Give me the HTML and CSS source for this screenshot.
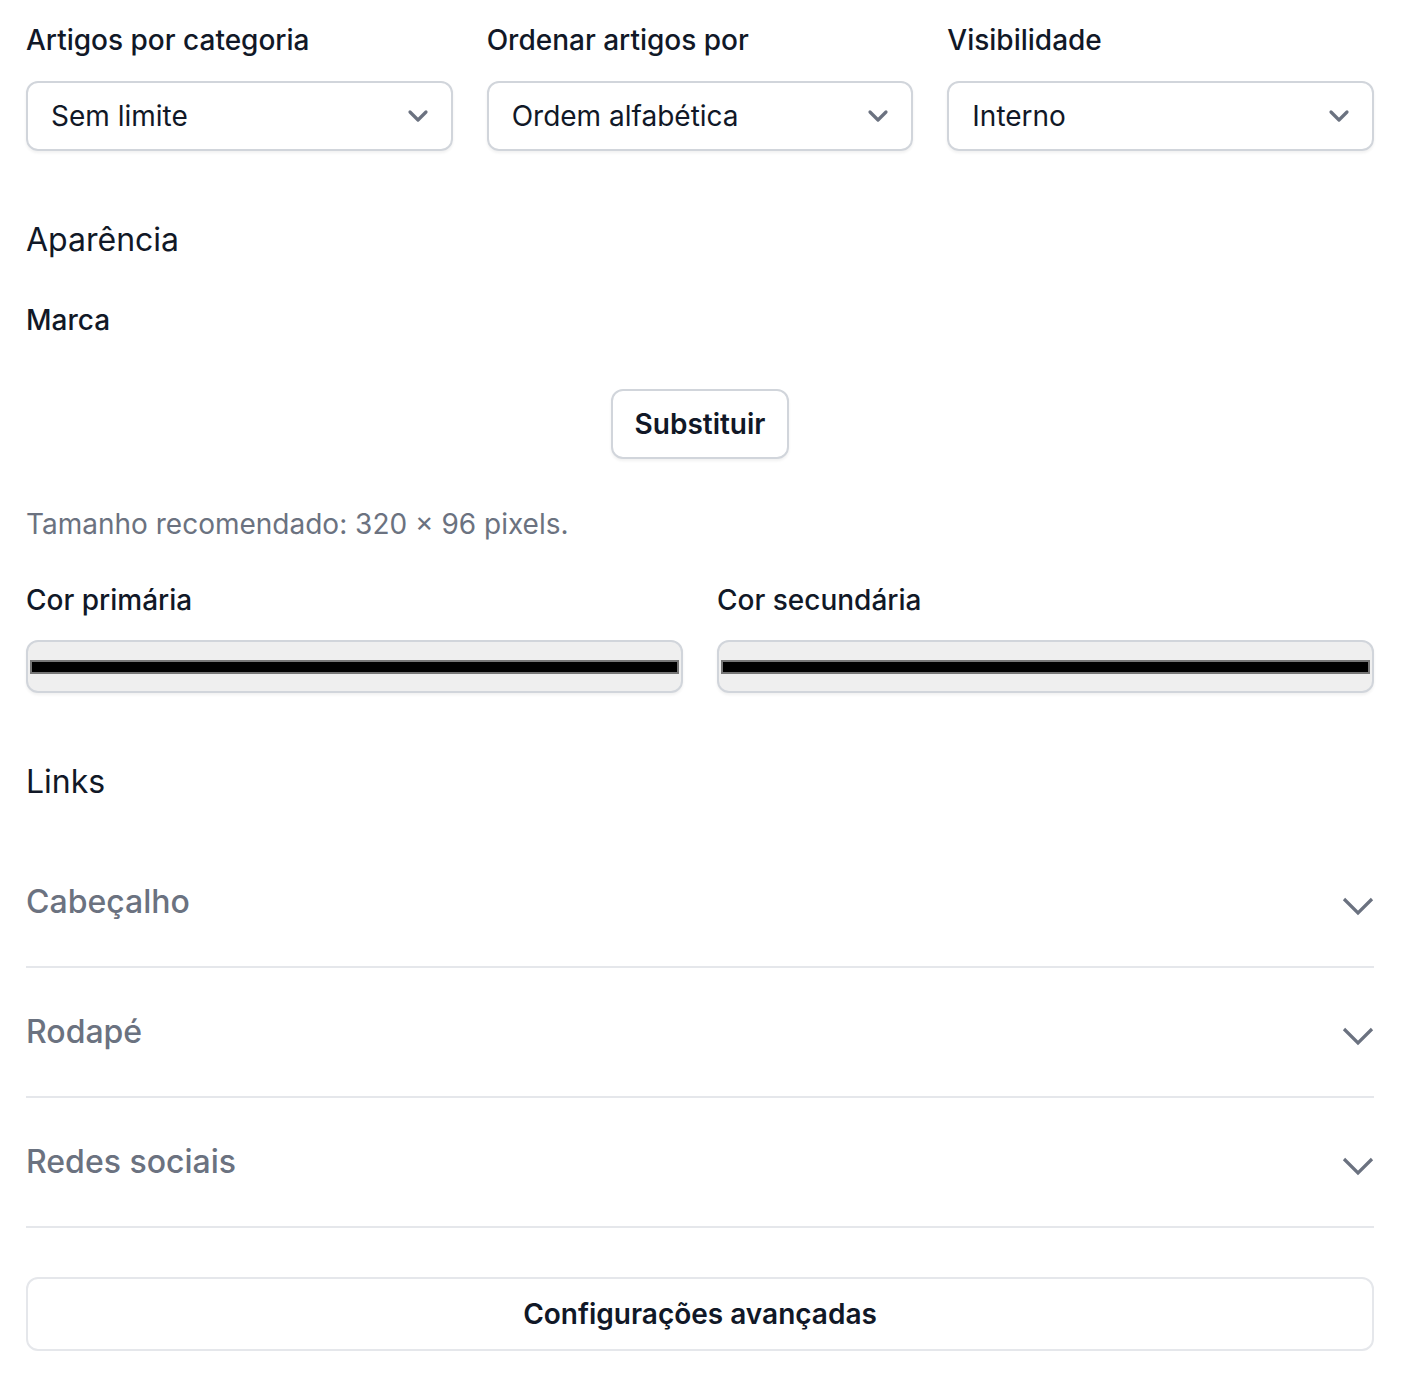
FILE: index.html
```html
<!DOCTYPE html>
<html lang="pt">
  <head>
    <meta charset="UTF-8" />
    <meta name="viewport" content="width=device-width, initial-scale=1" />
    <title>Configurações</title>
    <link rel="stylesheet" href="styles.css">
  </head>
  <body>
    <div class="page">
      <div class="row-3">
        <div class="field">
          <label class="label">Artigos por categoria</label>
          <div class="select">
            <span>Sem limite</span>
            <svg class="sel-chev" viewBox="0 0 22 14"><path d="M3 3l8 8 8-8" /></svg>
          </div>
        </div>
        <div class="field">
          <label class="label">Ordenar artigos por</label>
          <div class="select">
            <span>Ordem alfabética</span>
            <svg class="sel-chev" viewBox="0 0 22 14"><path d="M3 3l8 8 8-8" /></svg>
          </div>
        </div>
        <div class="field">
          <label class="label">Visibilidade</label>
          <div class="select">
            <span>Interno</span>
            <svg class="sel-chev" viewBox="0 0 22 14"><path d="M3 3l8 8 8-8" /></svg>
          </div>
        </div>
      </div>

      <h2 class="section-title appearance">Aparência</h2>
      <div class="label brand">Marca</div>
      <div class="center">
        <button class="btn">Substituir</button>
      </div>
      <p class="hint">Tamanho recomendado: 320 × 96 pixels.</p>

      <div class="row-2">
        <div class="field">
          <label class="label">Cor primária</label>
          <div class="color-input"><div class="swatch"></div></div>
        </div>
        <div class="field">
          <label class="label">Cor secundária</label>
          <div class="color-input"><div class="swatch"></div></div>
        </div>
      </div>

      <h2 class="section-title links">Links</h2>
      <div class="accordion">
        <div class="acc-item">
          <span>Cabeçalho</span>
          <svg class="acc-chev" viewBox="0 0 32 20"><path d="M2 3l14 14L30 3" /></svg>
        </div>
        <div class="acc-item">
          <span>Rodapé</span>
          <svg class="acc-chev" viewBox="0 0 32 20"><path d="M2 3l14 14L30 3" /></svg>
        </div>
        <div class="acc-item">
          <span>Redes sociais</span>
          <svg class="acc-chev" viewBox="0 0 32 20"><path d="M2 3l14 14L30 3" /></svg>
        </div>
      </div>

      <button class="btn btn-wide">Configurações avançadas</button>
    </div>
  </body>
</html>
```

FILE: styles.css
```css
body {
  margin: 0;  background: #fff;  font-family: Inter, "Noto Sans", sans-serif;  color: #111827;
}
.page {
  width: 1348px;  padding: 20px 0 30px 26px;
}
.label {
  display: block;  font-size: 28px;  line-height: 40px;  font-weight: 500;  color: #111827;
}
.row-3 {
  display: grid;  grid-template-columns: repeat(3, 1fr);  gap: 34px;
}
.row-2 {
  display: grid;  grid-template-columns: repeat(2, 1fr);  gap: 34px;  margin-top: 36px;
}
.select {
  margin-top: 21px;  height: 70px;  box-sizing: border-box;  border: 2px solid #d1d5db;  border-radius: 12px;
  box-shadow: 0 2px 3px rgba(0, 0, 0, 0.06);  display: flex;  align-items: center;  justify-content: space-between;
  padding: 0 22px 0 23px;  font-size: 28px;  color: #111827;
}
.sel-chev {
  width: 22px;  height: 14px;  fill: none;  stroke: #6b7280;  stroke-width: 3.2;  stroke-linecap: round;  stroke-linejoin: round;
}
.section-title {
  margin: 0;  font-size: 32px;  line-height: 48px;  font-weight: 400;  color: #111827;
}
.appearance {
  margin-top: 65px;
}
.brand {
  margin-top: 36px;
}
.center {
  display: flex;  justify-content: center;  margin-top: 49px;
}
.btn {
  font-family: inherit;  background: #fff;  border: 2px solid #d1d5db;  border-radius: 12px;  font-size: 28px;  font-weight: 600;
  color: #111827;  height: 70px;  padding: 0 22px;  box-shadow: 0 2px 3px rgba(0, 0, 0, 0.06);  cursor: pointer;
}
.hint {
  margin: 45px 0 0;  font-size: 28px;  line-height: 40px;  color: #6b7280;
}
.color-input {
  margin-top: 20px;  height: 53px;  box-sizing: border-box;  border: 2px solid #d1d5db;  border-radius: 12px;  background: #efefef;
  box-shadow: 0 2px 3px rgba(0, 0, 0, 0.06);  display: flex;  align-items: center;  padding: 0 2px;
}
.swatch {
  flex: 1;  height: 14px;  box-sizing: border-box;  background: #000;  border: 2px solid #767676;
}
.links {
  margin-top: 65px;
}
.accordion {
  margin-top: 32px;
}
.acc-item {
  display: flex;  justify-content: space-between;  align-items: center;  padding: 40px 0;  border-bottom: 2px solid #e5e7eb;
  font-size: 32px;  line-height: 48px;  font-weight: 500;  color: #6b7280;
}
.acc-chev {
  width: 32px;  height: 20px;  fill: none;  stroke: #6b7280;  stroke-width: 3.2;  margin-top: 8px;
}
.btn-wide {
  display: block;  width: 100%;  margin-top: 49px;  height: 74px;  border-color: #e5e7eb;  box-shadow: none;
}
```
